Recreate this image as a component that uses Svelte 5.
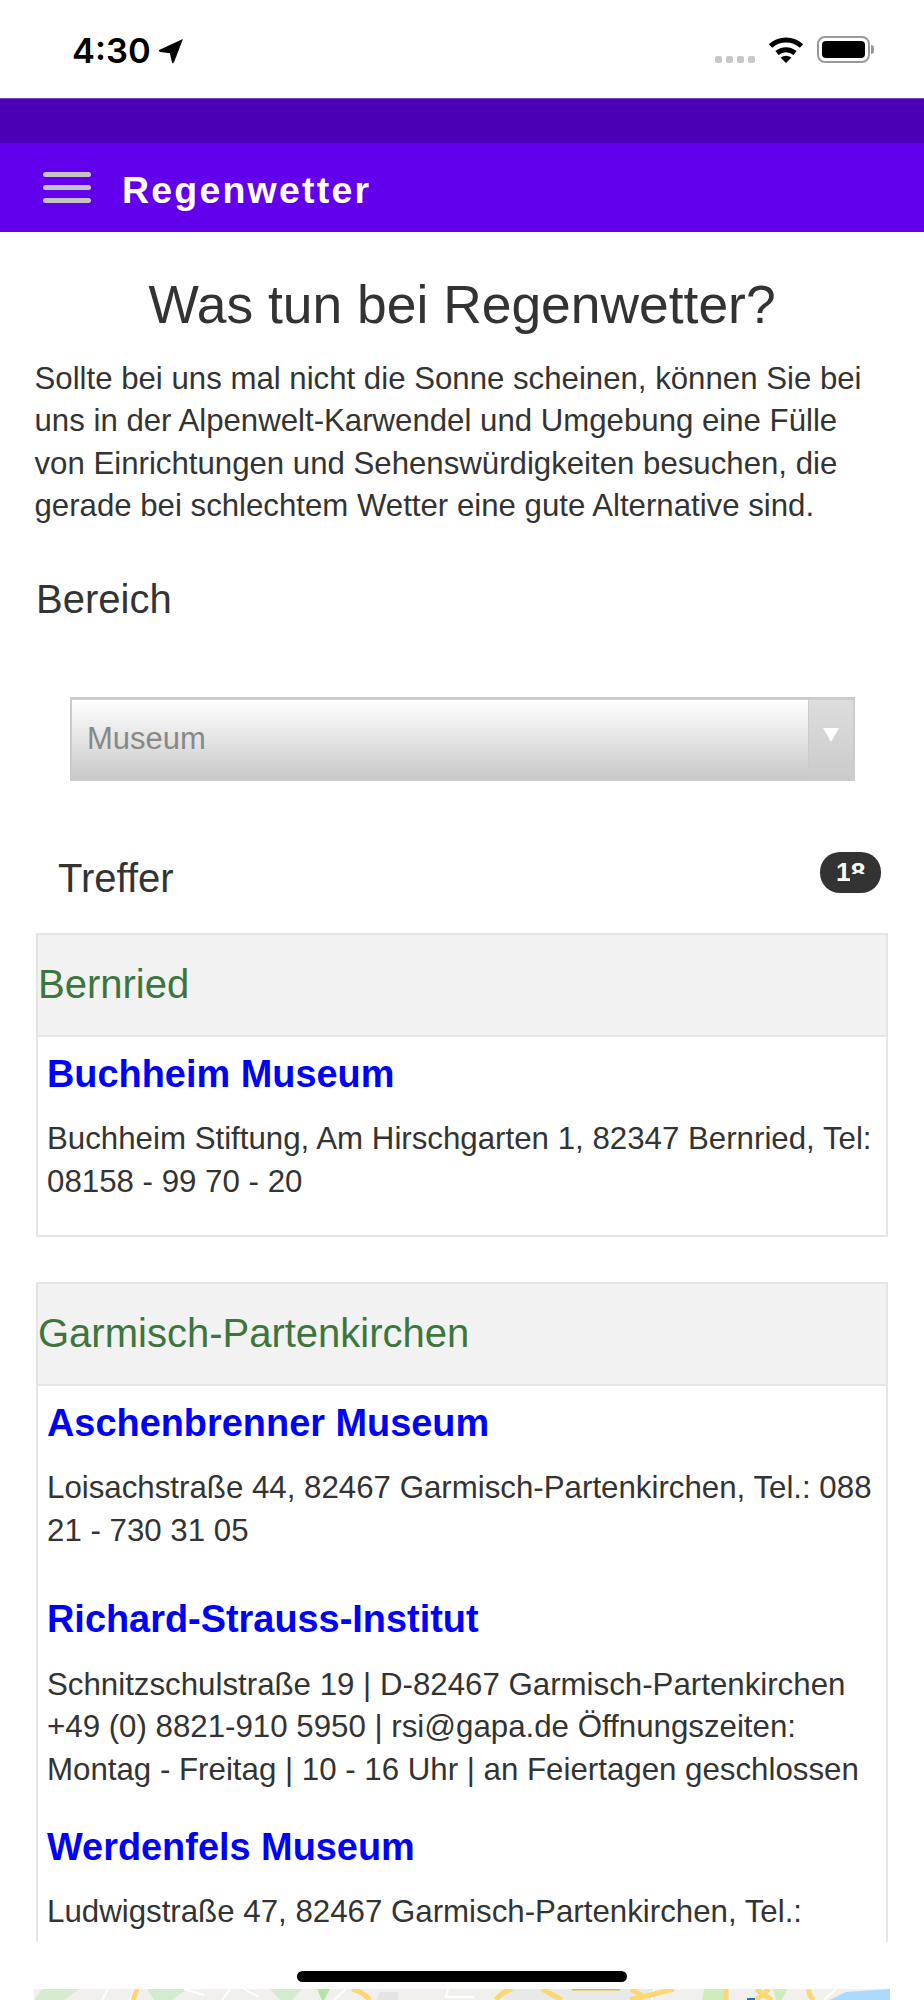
<script>
  const sections = [
    {
      ort: 'Bernried',
      items: [
        {
          name: 'Buchheim Museum',
          text: 'Buchheim Stiftung, Am Hirschgarten 1, 82347 Bernried, Tel: 08158 - 99 70 - 20'
        }
      ]
    },
    {
      ort: 'Garmisch-Partenkirchen',
      items: [
        {
          name: 'Aschenbrenner Museum',
          text: 'Loisachstraße 44, 82467 Garmisch-Partenkirchen, Tel.: 088 21 - 730 31 05',
          tall: true
        },
        {
          name: 'Richard-Strauss-Institut',
          text: 'Schnitzschulstraße 19 | D-82467 Garmisch-Partenkirchen +49 (0) 8821-910 5950 | rsi@gapa.de Öffnungszeiten: Montag - Freitag | 10 - 16 Uhr | an Feiertagen geschlossen'
        },
        {
          name: 'Werdenfels Museum',
          text: 'Ludwigstraße 47, 82467 Garmisch-Partenkirchen, Tel.: 08821 - 751 710 Di - So 10 - 17 Uhr'
        }
      ]
    }
  ];
</script>

<div class="phone">
  <div class="status">
    <div class="clock">
      <span>4:30</span>
      <svg class="arrow" viewBox="0 0 24 24" width="26" height="26">
        <path d="M23 1 L1 11 Q0 12 2 13 L11 14 L13 23 Q14 24 15 22 Z" fill="#000" />
      </svg>
    </div>
    <div class="indicators">
      <div class="dots"><i></i><i></i><i></i><i></i></div>
      <svg class="wifi" viewBox="0 0 36 26" width="36" height="26">
        <path d="M2.5 9 A23 23 0 0 1 33.5 9" fill="none" stroke="#000" stroke-width="5" />
        <path d="M9 16 A14 14 0 0 1 27 16" fill="none" stroke="#000" stroke-width="5" />
        <path d="M12.5 20.5 Q18 17 23.5 20.5 L18 26 Z" fill="#000" />
      </svg>
      <div class="battery"><b></b></div>
    </div>
  </div>

  <div class="statusbar-color"></div>
  <header class="toolbar">
    <div class="burger"><i></i><i></i><i></i></div>
    <span class="title">Regenwetter</span>
  </header>

  <main class="content">
    <h1>Was tun bei Regenwetter?</h1>
    <p class="intro">
      Sollte bei uns mal nicht die Sonne scheinen, können Sie bei uns in der Alpenwelt-Karwendel und Umgebung eine Fülle von Einrichtungen und Sehenswürdigkeiten besuchen, die gerade bei schlechtem Wetter eine gute Alternative sind.
    </p>

    <h2 class="bereich">Bereich</h2>

    <div class="select">
      <span>Museum</span>
      <div class="select-arrow"><i></i></div>
    </div>

    <div class="treffer">
      <h2>Treffer</h2>
      <span class="badge">18</span>
    </div>

    {#each sections as section}
      <section class="card">
        <div class="card-head">{section.ort}</div>
        <div class="card-body">
          {#each section.items as item}
            <article class="item" class:tall={item.tall}>
              <h3>{item.name}</h3>
              <p>{item.text}</p>
            </article>
          {/each}
        </div>
      </section>
    {/each}
  </main>

  <div class="home-area"><div class="home"></div></div>

  <svg class="map" viewBox="0 0 856 11" width="856" height="11" preserveAspectRatio="none">
    <rect width="856" height="11" fill="#f1f0ec" />
    <path d="M0 11 L8 0 H45 L30 11 Z" fill="#d5ecd0" />
    <path d="M113 0 H153 L138 11 H120 Z" fill="#d3ecd0" />
    <path d="M236 0 H268 L258 11 H246 Z" fill="#d3ecd0" />
    <path d="M283 0 H296 L290 11 H288 Z" fill="#b4e3a4" />
    <path d="M346 3 H364 V11 H342 Z" fill="#e4e4e4" />
    <path d="M466 0 H620 V11 H470 Z" fill="#e9e9e7" />
    <path d="M670 0 H689 L692 11 H668 Z" fill="#cdeebb" />
    <path d="M739 0 H753 L748 11 H742 Z" fill="#cdeebb" />
    <path d="M796 11 L812 3 L856 0 V11 Z" fill="#aadaff" />
    <path d="M74 0 L68 11 M100 0 L96 11 M150 0 L170 6 M196 0 L188 11 M210 0 L225 8 M312 0 L300 11 M414 0 L412 8 L440 8 M620 0 L618 11 M802 0 L790 11" fill="none" stroke="#fff" stroke-width="2" />
    <path d="M103 0 L99 11 M318 0 Q328 2 336 11 M478 0 Q466 4 462 11 M508 0 L528 11 M597 0 L610 8 M640 0 L596 11 M692 0 V11 M722 0 L738 11 M735 0 L722 11 M775 0 Q774 6 780 11" fill="none" stroke="#fbd872" stroke-width="5" />
    <rect x="538" width="48" height="1.5" fill="#e6b922" />
    <rect x="713" y="9" width="8" height="2" fill="#2a6fc0" />
  </svg>
</div>

<style>
  :global(body) {
    margin: 0;
    background: #fff;
  }

  .phone {
    width: 924px;
    height: 2000px;
    overflow: hidden;
    display: flex;
    flex-direction: column;
    font-family: "Liberation Sans", Arial, sans-serif;
    color: #333;
    background: #fff;
  }

  .status {
    height: 98px;
    flex: none;
    display: flex;
    justify-content: space-between;
    padding: 34px 48px 0 72px;
    box-sizing: border-box;
  }

  .clock {
    display: flex;
    align-items: flex-start;
    gap: 7px;
    font-family: Inter, sans-serif;
    font-size: 34.5px;
    font-weight: 600;
    line-height: 34px;
    color: #000;
  }

  .arrow {
    margin-top: 4px;
  }

  .indicators {
    display: flex;
    align-items: flex-end;
    height: 29px;
  }

  .dots {
    display: flex;
    gap: 4px;
    margin-right: 13px;
  }

  .dots i {
    width: 7px;
    height: 7px;
    border-radius: 2px;
    background: #c8c8c8;
  }

  .wifi {
    margin-right: 13px;
  }

  .battery {
    width: 53px;
    height: 27px;
    box-sizing: border-box;
    border: 2px solid #999;
    border-radius: 8px;
    padding: 3px;
    position: relative;
    margin-right: 6px;
  }

  .battery::after {
    content: "";
    position: absolute;
    right: -6px;
    top: 7px;
    width: 3px;
    height: 9px;
    border-radius: 0 3px 3px 0;
    background: #999;
  }

  .battery b {
    display: block;
    height: 100%;
    border-radius: 4px;
    background: #000;
  }

  .statusbar-color {
    height: 45px;
    flex: none;
    background: #4b00b8;
    border-top: 1px solid #7a45c4;
    box-sizing: border-box;
  }

  .toolbar {
    height: 89px;
    flex: none;
    display: flex;
    align-items: center;
    padding-left: 43px;
    background: #6200ee;
  }

  .burger {
    width: 48px;
    display: flex;
    flex-direction: column;
    gap: 8px;
  }

  .burger i {
    height: 5px;
    border-radius: 2.5px;
    background: #c4c4c4;
  }

  .title {
    margin-left: 31px;
    padding-top: 5px;
    font-size: 37.5px;
    font-weight: bold;
    letter-spacing: 2.2px;
    color: #fff;
  }

  .content {
    height: 1710px;
    flex: none;
    overflow: hidden;
    box-sizing: border-box;
    padding: 0 36px;
  }

  h1 {
    margin: 41px 0 0;
    font-size: 53.4px;
    font-weight: normal;
    line-height: 64px;
    text-align: center;
  }

  .intro {
    margin: 21px 20px 0 -1.5px;
    font-size: 31.2px;
    line-height: 42.4px;
  }

  h2 {
    margin: 0;
    font-size: 40px;
    font-weight: normal;
    line-height: 46px;
  }

  .bereich {
    margin-top: 48.5px;
  }

  .select {
    margin: 74.5px 33px 0 34px;
    height: 84px;
    box-sizing: border-box;
    display: flex;
    align-items: center;
    justify-content: space-between;
    border: 2px solid #ccc;
    border-top-width: 3px;
    background: linear-gradient(#fff, #c9c9c9);
    font-size: 31px;
    color: #888;
  }

  .select span {
    margin-left: 15px;
  }

  .select-arrow {
    width: 45px;
    align-self: stretch;
    display: flex;
    justify-content: center;
    padding-top: 28px;
    box-sizing: border-box;
    background: linear-gradient(#ddd, #cbcbcb);
    border-left: 1px solid #ccc;
  }

  .select-arrow i {
    width: 0;
    height: 0;
    border-left: 8px solid transparent;
    border-right: 8px solid transparent;
    border-top: 14px solid #fff;
  }

  .treffer {
    margin: 71px 7px 0 22px;
    display: flex;
    justify-content: space-between;
    align-items: flex-start;
    height: 81px;
  }

  .treffer h2 {
    padding-top: 3px;
  }

  .badge {
    position: relative;
    width: 61px;
    height: 41px;
    box-sizing: border-box;
    padding-left: 16px;
    border-radius: 20px;
    background: #333;
    color: #fff;
    font-size: 26.5px;
    font-weight: bold;
    line-height: 41px;
  }

  /* the second digit is half rendered in the shot */
  .badge::after {
    content: "";
    position: absolute;
    left: 30px;
    top: 22px;
    width: 18px;
    height: 14px;
    background: #333;
  }

  .card {
    border: 2px solid #e5e5e5;
    margin-bottom: 45px;
  }

  .card-head {
    height: 102px;
    box-sizing: border-box;
    border-bottom: 2px solid #e5e5e5;
    background: #f2f2f2;
    color: #3c763d;
    font-size: 40px;
    line-height: 99px;
  }

  .card-body {
    padding: 0 9px 13px;
  }

  .item {
    padding: 14px 0 19px;
  }

  .item.tall {
    padding-bottom: 30px;
  }

  h3 {
    margin: 0;
    font-size: 37.9px;
    font-weight: bold;
    line-height: 46px;
    color: #00f;
  }

  .item p {
    margin: 21.5px 0 0;
    font-size: 31.25px;
    line-height: 42.4px;
  }

  .home-area {
    height: 47px;
    flex: none;
    display: flex;
    justify-content: center;
    padding-top: 29px;
    box-sizing: border-box;
  }

  .home {
    width: 330px;
    height: 11px;
    border-radius: 6px;
    background: #000;
  }

  .map {
    flex: none;
    margin-left: 34px;
    display: block;
  }
</style>
